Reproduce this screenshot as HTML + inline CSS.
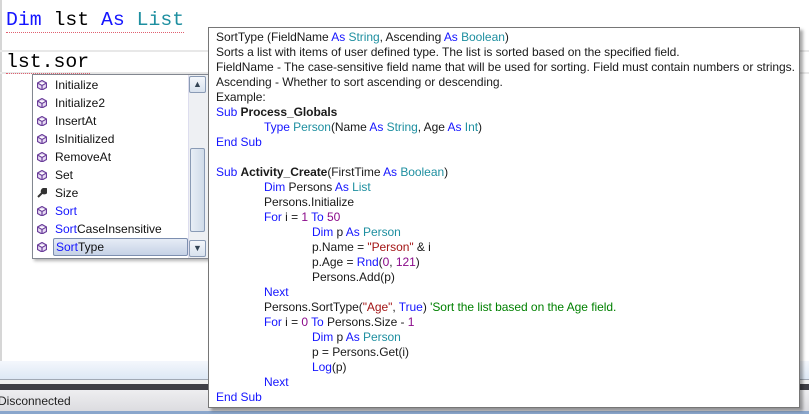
<!DOCTYPE html>
<html><head><meta charset="utf-8"><style>
*{margin:0;padding:0;box-sizing:border-box}
body{width:809px;height:414px;overflow:hidden;background:#fff;position:relative;font-family:"Liberation Sans",sans-serif}
.mono{position:absolute;font-family:"Liberation Mono",monospace;font-size:19.8px;white-space:pre;line-height:24px}
.kw{color:#1515ff}.ty{color:#1e8fa0}.nu{color:#8a0a8a}.st{color:#a31515}.cm{color:#008000}
#list{position:absolute;left:32px;top:74px;width:177px;height:185px;border:1px solid #828790;background:#fff;box-shadow:2px 2px 3px rgba(0,0,0,.3)}
.it{position:absolute;left:0;height:18px;font-size:12px;line-height:18px;color:#111}
.it .ic{position:absolute;left:4px;top:4px;width:10px;height:10px}
.it span{position:absolute;left:22px;white-space:nowrap}
#tip{position:absolute;left:208px;top:27px;width:592px;height:381px;border:1px solid #767676;background:#fff;box-shadow:3px 3px 3px rgba(0,0,0,.35);font-size:12px;line-height:15px;color:#1a1a1a;padding:2px 0 0 7px;white-space:pre;letter-spacing:-0.04px}
#tip b{font-weight:bold}
.t1{padding-left:48px;display:inline-block}.t2{padding-left:96px;display:inline-block}
</style></head><body>
<div style="position:absolute;left:0;top:0;width:2px;height:361px;background:#d6d6d6"></div>
<div class="mono" style="left:6px;top:8px"><span class="kw">Dim</span> lst <span class="kw">As</span> <span class="ty">List</span></div>
<div style="position:absolute;left:6px;top:31px;width:178px;height:2px;border-bottom:1px dotted #e06070"></div>
<div style="position:absolute;left:0;top:50px;width:809px;height:24px;border-top:2px solid #e8e8e8;border-bottom:2px solid #e8e8e8"></div>
<div class="mono" style="left:6px;top:50px">lst.sor</div>
<div style="position:absolute;left:6px;top:72px;width:84px;height:2px;border-bottom:1px dotted #e06070"></div>
<div id="list">
<svg width="0" height="0" style="position:absolute"><defs><g id="cube"><path d="M5 0.5 L9.5 3 L9.5 7.5 L5 10 L0.5 7.5 L0.5 3Z M0.5 3 L5 5.5 L9.5 3 M5 5.5 L5 10" fill="#e8dcf4" stroke="#6a3d9a" stroke-width="1.2"/></g></defs></svg>
<div class="it" style="top:1px"><svg class="ic"><use href="#cube"/></svg><span>Initialize</span></div>
<div class="it" style="top:19px"><svg class="ic"><use href="#cube"/></svg><span>Initialize2</span></div>
<div class="it" style="top:37px"><svg class="ic"><use href="#cube"/></svg><span>InsertAt</span></div>
<div class="it" style="top:55px"><svg class="ic"><use href="#cube"/></svg><span>IsInitialized</span></div>
<div class="it" style="top:73px"><svg class="ic"><use href="#cube"/></svg><span>RemoveAt</span></div>
<div class="it" style="top:91px"><svg class="ic"><use href="#cube"/></svg><span>Set</span></div>
<div class="it" style="top:109px"><svg class="ic" viewBox="0 0 10 10"><path d="M1 9 L5.5 4.5 M5 5 C4 2 6 0 9 1 L7 3 L8 4 L10 2 C10 5 8 6 5.5 5" stroke="#333" stroke-width="2" fill="#333"/></svg><span>Size</span></div>
<div class="it" style="top:127px"><svg class="ic"><use href="#cube"/></svg><span style="color:#1515ff">Sort</span></div>
<div class="it" style="top:145px"><svg class="ic"><use href="#cube"/></svg><span><span style="position:static;color:#1515ff">Sort</span>CaseInsensitive</span></div>
<div class="it" style="top:163px;width:155px"><svg class="ic"><use href="#cube"/></svg><span style="left:20px;top:0;width:135px;height:18px;border:1px solid #7d8fb0;background:linear-gradient(#e6ecf6,#c6d2e6);padding-left:2px;line-height:16px;border-radius:2px"><span style="position:static;color:#1515ff">Sort</span>Type</span></div>
<div style="position:absolute;left:155px;top:0;width:20px;height:183px;background:#eef0f3;border-left:1px solid #dde"></div>
<div style="position:absolute;left:156px;top:1px;width:17px;height:17px;border:1px solid #8a9bb5;background:linear-gradient(#f4f7fb,#d8e2ee);border-radius:2px;font-size:9px;text-align:center;line-height:15px;color:#345">&#9650;</div>
<div style="position:absolute;left:156px;top:165px;width:17px;height:17px;border:1px solid #8a9bb5;background:linear-gradient(#f4f7fb,#d8e2ee);border-radius:2px;font-size:9px;text-align:center;line-height:15px;color:#345">&#9660;</div>
<div style="position:absolute;left:157px;top:73px;width:15px;height:84px;border:1px solid #8a9bb5;background:linear-gradient(90deg,#e8eef6,#cfdbe9);border-radius:2px"></div>
</div>
<div style="position:absolute;left:0;top:361px;width:809px;height:19px;background:linear-gradient(#f4f7fc,#dde8f5);border-bottom:1px solid #a0a8b4"></div>
<div style="position:absolute;left:0;top:380px;width:809px;height:4px;background:#f0f0f0"></div>
<div style="position:absolute;left:0;top:384px;width:809px;height:6px;background:#3f3f46"></div>
<div style="position:absolute;left:0;top:390px;width:809px;height:21px;background:linear-gradient(#eeeef0,#dcdce0);font-size:12px;line-height:22px;color:#222;padding-left:0"><span style="margin-left:-2px">Disconnected</span></div>
<div style="position:absolute;left:0;top:411px;width:809px;height:3px;background:#8aa6cc"></div>
<div id="tip">SortType (FieldName <span class="kw">As</span> <span class="ty">String</span>, Ascending <span class="kw">As</span> <span class="ty">Boolean</span>)
Sorts a list with items of user defined type. The list is sorted based on the specified field.
FieldName - The case-sensitive field name that will be used for sorting. Field must contain numbers or strings.
Ascending - Whether to sort ascending or descending.
Example:
<span class="kw">Sub</span> <b>Process_Globals</b>
<span class="t1"><span class="kw">Type</span> <span class="ty">Person</span>(Name <span class="kw">As</span> <span class="ty">String</span>, Age <span class="kw">As</span> <span class="ty">Int</span>)</span>
<span class="kw">End Sub</span>

<span class="kw">Sub</span> <b>Activity_Create</b>(FirstTime <span class="kw">As</span> <span class="ty">Boolean</span>)
<span class="t1"><span class="kw">Dim</span> Persons <span class="kw">As</span> <span class="ty">List</span></span>
<span class="t1">Persons.Initialize</span>
<span class="t1"><span class="kw">For</span> i = <span class="nu">1</span> <span class="kw">To</span> <span class="nu">50</span></span>
<span class="t2"><span class="kw">Dim</span> p <span class="kw">As</span> <span class="ty">Person</span></span>
<span class="t2">p.Name = <span class="st">"Person"</span> &amp; i</span>
<span class="t2">p.Age = <span class="kw">Rnd</span>(<span class="nu">0</span>, <span class="nu">121</span>)</span>
<span class="t2">Persons.Add(p)</span>
<span class="t1"><span class="kw">Next</span></span>
<span class="t1">Persons.SortType(<span class="st">"Age"</span>, <span class="kw">True</span>) <span class="cm">'Sort the list based on the Age field.</span></span>
<span class="t1"><span class="kw">For</span> i = <span class="nu">0</span> <span class="kw">To</span> Persons.Size - <span class="nu">1</span></span>
<span class="t2"><span class="kw">Dim</span> p <span class="kw">As</span> <span class="ty">Person</span></span>
<span class="t2">p = Persons.Get(i)</span>
<span class="t2"><span class="kw">Log</span>(p)</span>
<span class="t1"><span class="kw">Next</span></span>
<span class="kw">End Sub</span></div>
</body></html>
